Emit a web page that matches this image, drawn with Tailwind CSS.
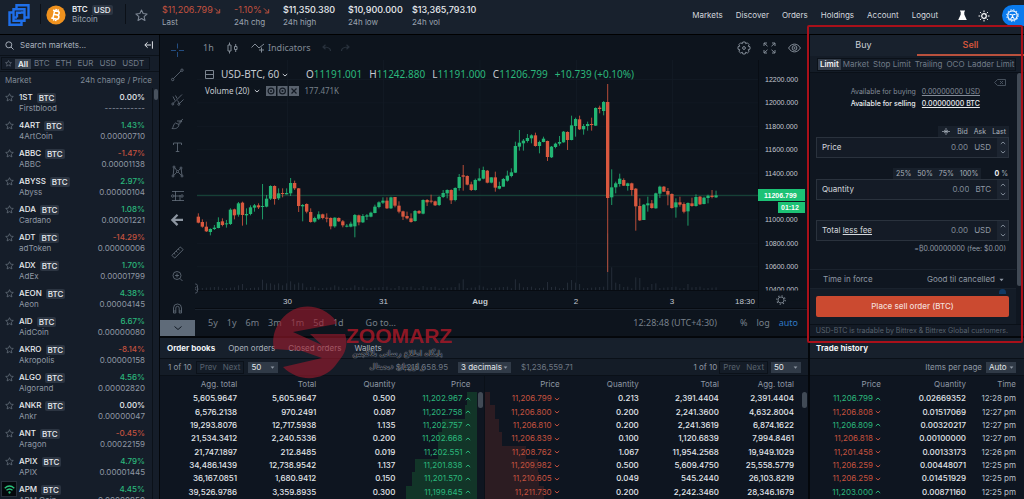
<!DOCTYPE html>
<html lang="en">
<head>
<meta charset="utf-8">
<meta name="viewport" content="width=device-width, initial-scale=1">
<title>USD-BTC – Bitcoin</title>
<script src="https://cdn.jsdelivr.net/npm/@tailwindcss/browser@4"></script>
</head>
<body class="h-screen overflow-hidden bg-[#04070b] font-['Inter','Liberation_Sans',sans-serif] text-[8px] leading-[11px] text-[#c9ced6]">

<svg class="hidden">
  <symbol id="star" viewBox="0 0 12 12"><path d="M6 .9l1.5 3.3 3.6.4-2.700 2.400.8 3.600L6 8.800l-3.200 1.800.8-3.600L.9 4.600l3.600-.4z" fill="none" stroke="currentColor" stroke-linejoin="round"/></symbol>
  <symbol id="caret" viewBox="0 0 6 4"><path d="M.5.5h5L3 3.500z" fill="currentColor"/></symbol>
  <symbol id="up" viewBox="0 0 6 4"><path d="M.8 3L3 1l2.200 2" fill="none" stroke="currentColor"/></symbol>
  <symbol id="down" viewBox="0 0 6 4"><path d="M.8 1L3 3l2.200-2" fill="none" stroke="currentColor"/></symbol>
  <symbol id="fall" viewBox="0 0 8 8"><path d="M1 1.500l5 5M6.500 2.500v4.300H2.200" fill="none" stroke="currentColor" stroke-width="1.100"/></symbol>
</svg>

<div class="relative flex h-full flex-col">

  <!-- Top bar -->
  <header class="flex h-[35px] shrink-0 items-start border-b border-black bg-[#18212d]">
    <a href="#" aria-label="Home" class="mt-[3px] ml-[7px] block">
      <svg class="h-6 w-6" viewBox="0 0 24 24" fill="none" stroke="#1f6fe8" stroke-width="2.400"><path d="M9.500 6V2.200h12v12.300h-4M14.500 17.500v4.300h-12V9.500h4"/><path d="M10 14.500H6.500V6.200h11v3.300M14 9.500h3.500v8.200h-11v-3.200" /><path d="M10 14.500V9.800h4"/></svg>
    </a>
    <div class="mt-1 ml-[9px] h-5 border-l border-[#0b1017]"></div>
    <svg class="mt-[5px] ml-[5px] h-5 w-5" viewBox="0 0 20 20"><circle cx="10" cy="10" r="9.600" fill="#f0921e"/><g transform="rotate(13 10 10)" fill="none" stroke="#fff" stroke-width="1.500"><path d="M6 6h4.800c2.500 0 2.500 3.700 0 3.700H7.700h3.500c2.800 0 2.800 4.200 0 4.200H6M7.700 6v7.900M8.900 4v2M11 4v2M8.900 14v2M11 14v2"/></g></svg>
    <div class="mt-1 ml-[6px] w-[53px]">
      <div class="flex items-center gap-1 font-semibold text-[#e8ebef]">BTC <span class="rounded-xs bg-[#2c3542] px-[2px] leading-[10px] font-medium">USD</span></div>
      <div class="leading-[9px] text-[#9aa3af]">Bitcoin</div>
    </div>
    <div class="mt-1 h-5 border-l border-[#0b1017]"></div>
    <button aria-label="Add to favourites" class="mt-[9px] ml-[9px] text-[#7c8693]"><svg class="h-[13px] w-[13px]"><use href="#star"/></svg></button>
    <dl class="mt-1 ml-[14px] flex leading-[12px] text-[#9aa3af]">
      <div class="flex w-[72px] flex-col-reverse"><dt>Last</dt><dd class="flex items-center gap-px text-[9px] text-[#c4523f]">$11,206.799<svg class="h-[7px] w-[7px]"><use href="#fall"/></svg></dd></div>
      <div class="flex w-[49px] flex-col-reverse"><dt>24h chg</dt><dd class="flex items-center gap-px text-[9px] text-[#c4523f]">-1.10%<svg class="h-[7px] w-[7px]"><use href="#fall"/></svg></dd></div>
      <div class="flex w-[65px] flex-col-reverse"><dt>24h high</dt><dd class="text-[9px] font-medium text-[#e8ebef]">$11,350.380</dd></div>
      <div class="flex w-[64px] flex-col-reverse"><dt>24h low</dt><dd class="text-[9px] font-medium text-[#e8ebef]">$10,900.000</dd></div>
      <div class="flex w-[72px] flex-col-reverse"><dt>24h vol</dt><dd class="text-[9px] font-medium text-[#e8ebef]">$13,365,793.10</dd></div>
    </dl>
    <nav class="mt-[10px] ml-auto flex gap-[13px] text-[#d4d8de]">
      <a href="#">Markets</a><a href="#">Discover</a><a href="#">Orders</a><a href="#">Holdings</a><a href="#">Account</a><a href="#">Logout</a>
    </nav>
    <button aria-label="Labs" class="mt-[10px] ml-[19px]"><svg class="h-[11px] w-[11px]" viewBox="0 0 11 11"><path d="M3 .5h5v1H7.300v3L9.800 10H1.200l2.500-5.500v-3H3z" fill="#fff"/></svg></button>
    <button aria-label="Theme" class="mt-[10px] ml-[10px]"><svg class="h-3 w-3" viewBox="0 0 12 12" fill="none" stroke="#fff"><circle cx="6" cy="6" r="2.300" stroke-width="1.200"/><path d="M6 .5v1.700M6 9.800v1.700M.5 6h1.700M9.800 6h1.700M2.100 2.100l1.200 1.200M8.700 8.700l1.200 1.200M9.900 2.100L8.700 3.300M3.300 8.700L2.100 9.900"/></svg></button>
    <button aria-label="Accessibility" class="mt-[5px] ml-3 flex h-[21px] w-[22px] items-center rounded-l-full bg-[#0a7bee] pl-1"><svg class="h-[13px] w-[13px]" viewBox="0 0 13 13" fill="none" stroke="#fff"><circle cx="6.500" cy="6.500" r="4.700" stroke-width="1.200"/><circle cx="6.500" cy="6.500" r="5.800" stroke-dasharray="1.300 1.740"/><path d="M3.500 5.300l3 .7 3-.7M6.500 6v1.800M4.600 10l1.900-2.500L8.400 10" stroke-width="1.100"/></svg></button>
  </header>

  <div class="flex min-h-0 flex-1">

    <!-- Market list -->
    <aside class="flex w-[159px] shrink-0 flex-col bg-[#151d29]">
      <div class="flex h-[21px] shrink-0 items-center border-b border-[#0b1119] px-[5px]">
        <svg class="h-[9px] w-[9px]" viewBox="0 0 9 9" fill="none" stroke="#a5adb8"><circle cx="3.800" cy="3.800" r="3"/><path d="M6 6l2.600 2.600"/></svg>
        <input type="search" aria-label="Search markets" placeholder="Search markets..." class="ml-[6px] min-w-0 flex-1 bg-transparent placeholder:text-[#aab2bd]">
        <button aria-label="Collapse"><svg class="mr-px h-2 w-[9px]" viewBox="0 0 9 8" fill="none" stroke="#e0e4e9"><path d="M8.400.3v7.400M7 4H1M3.600 1.300L.8 4l2.800 2.700"/></svg></button>
      </div>
      <div class="flex h-4 shrink-0 items-center border-b border-[#0b1119] px-[1px]">
        <div class="flex items-center border border-[#0b1119] pr-[2px] text-[#717b88]">
          <button aria-label="Favourites" class="px-[3px]"><svg class="h-[7px] w-[7px]"><use href="#star"/></svg></button>
          <button class="bg-[#3a4350] px-[3px] leading-[10px] font-semibold text-[#f0f2f5]">All</button><button class="px-[3px]">BTC</button><button class="px-[3px]">ETH</button><button class="px-[3px]">EUR</button><button class="px-[3px]">USD</button><button class="px-[3px]">USDT</button>
        </div>
      </div>
      <div class="flex h-[16px] shrink-0 items-center justify-between pr-[7px] pl-[5px] text-[#7f8995]"><span>Market</span><span>24h change / Price</span></div>
      <div class="flex min-h-0 flex-1">
        <ul id="markets" class="flex-1 overflow-hidden border-r border-[#0b1119] pt-1"></ul>
        <div class="w-[6px]"><div class="mt-[1px] ml-px h-[11px] w-1 rounded-full bg-[#48515d]"></div></div>
      </div>
    </aside>

    <!-- Chart and order books -->
    <main class="ml-px flex min-w-0 flex-1 flex-col">
      <section class="flex h-[301px] shrink-0 bg-[#0d141d]">
        <div class="flex w-[35px] shrink-0 flex-col justify-between text-[#66707c]">
          <svg class="h-[284px] w-[35px]" viewBox="0 0 35 284" fill="none" stroke="currentColor" stroke-width=".8">
            <path d="M17.500 8.500v5M17.500 17v5M11 15.500h5M19 15.500h5" stroke="#2a5c9a"/>
            <g><path d="M13.500 43.500l7.500-7.500"/><circle cx="12.700" cy="44.500" r="1.200"/><circle cx="22" cy="35.200" r="1.200"/></g>
            <g><path d="M13.500 68l8.500-8.500M19.500 68.500l4-4M15 65.500l-2-4M17 63.500l-1.500-3M17.500 65.500l2 3"/><circle cx="12.800" cy="69" r="1"/><circle cx="18.800" cy="69.300" r="1"/></g>
            <path d="M12 93.500c1.500-.5 1-4.500 3.500-5.500l3.500 1.500c-.5 4-4 4.500-7 4zM17 86l5 0-3 3.500M18.500 88l4.500-4"/>
            <path d="M13.500 110v-2h8v2M17.500 108v8.500M15.800 116.500h3.500"/>
            <g><circle cx="13" cy="141" r="1"/><circle cx="14" cy="132" r="1"/><circle cx="21" cy="133" r="1"/><circle cx="22" cy="141" r="1"/><circle cx="17.500" cy="136.500" r="1"/><path d="M13.200 140l.7-7M14.800 132.600l2 3M20.400 133.700l-2 2M21.200 134l.7 6M13.800 140.400l3-3.200M18.300 137.200l3 3.200"/></g>
            <g><path d="M12 156.500h12M14 161h6M12 165.500h12M15.500 156v10M20 160v6"/><circle cx="22" cy="161" r="1.200"/><circle cx="12.700" cy="161" r="1.200"/></g>
            <path d="M17.500 179.700l-5.200 5.200 5.200 5.200M13 184.900h10" stroke="#8d96a1" stroke-width="2.200"/>
            <g transform="translate(17.500 217.500) rotate(-45)"><rect x="-6" y="-2" width="12" height="4" rx=".5"/><path d="M-3-2v2M0-2v2M3-2v2"/></g>
            <g><circle cx="17" cy="240.500" r="4"/><path d="M20 243.500l2.500 2.500M15 240.500h4M17 238.500v4"/></g>
            <path d="M13.500 278v-5a4 4 0 018 0v5h-2.300v-5a1.700 1.700 0 00-3.400 0v5zM13.500 276h2.300M19.200 276h2.300"/>
          </svg>
          <button aria-label="Hide drawing tools" class="flex h-[16px] items-center justify-center bg-[#5f6b79]"><svg class="h-2 w-2" viewBox="0 0 8 8"><path d="M.5 2.500L4 5.500l3.500-3" fill="none" stroke="#101822"/></svg></button>
        </div>

        <div class="flex min-w-0 flex-1 flex-col font-['Noto_Sans','Open_Sans',sans-serif]">
          <div class="flex h-[25px] shrink-0 items-center text-[9px] text-[#828b96]">
            <button class="ml-2 w-[24px] text-left">1h</button>
            <button aria-label="Chart style" class="w-[24px]"><svg class="h-3 w-[11px]" viewBox="0 0 11 12" fill="none" stroke="currentColor"><path d="M1 3h3v6H1zM2.500.5V3M2.500 9v2.500M7.500 4.500h2.500v3H7.500zM8.700 2v2.500M8.700 7.500V10"/></svg></button>
            <button class="flex items-center gap-[3px]"><svg class="h-[11px] w-[14px]" viewBox="0 0 14 11" fill="none" stroke="currentColor"><path d="M.5 5.500L4 2l4 4 5-4M10.500 5.500v5M8 8h5"/></svg>Indicators</button>
            <button aria-label="Undo" class="ml-[11px] text-[#28313c]"><svg class="h-2 w-[9px]" viewBox="0 0 9 8" fill="none" stroke="currentColor" stroke-width="1.200"><path d="M8.500 7c0-3-2-4-7-4M3.500.8L1 3l2.500 2.300"/></svg></button>
            <button aria-label="Redo" class="ml-[10px] text-[#28313c]"><svg class="h-2 w-[9px]" viewBox="0 0 9 8" fill="none" stroke="currentColor" stroke-width="1.200"><path d="M.5 7c0-3 2-4 7-4M5.500.8L8 3 5.500 5.300"/></svg></button>
            <div class="mr-[7px] ml-auto flex items-center gap-3">
              <button aria-label="Settings"><svg class="h-[14px] w-[14px]" viewBox="0 0 14 14" fill="none" stroke="currentColor"><path d="M5.800 1h2.400l.5 1.700 1.600-.9 1.800 1.800-.9 1.600 1.800.5v2.500l-1.800.5.9 1.700-1.800 1.700-1.600-.9L8.200 13H5.800l-.5-1.800-1.600.9-1.800-1.700.9-1.700L1 8.200V5.700l1.800-.5-.9-1.600 1.800-1.800 1.600.9z"/><circle cx="7" cy="7" r="1.400"/></svg></button>
              <button aria-label="Full screen"><svg class="h-[12px] w-[13px]" viewBox="0 0 13 12" fill="none" stroke="currentColor"><path d="M1 4V1h3M1 1l3.500 3.200M9 1h3v3M12 1L8.500 4.200M1 8v3h3M1 11l3.500-3.200M9 11h3V8M12 11L8.500 7.800"/></svg></button>
              <button aria-label="Visibility"><svg class="h-[10px] w-[13px]" viewBox="0 0 13 10" fill="none" stroke="currentColor"><path d="M.6 5C3.500-.2 9.500-.2 12.400 5 9.500 10.200 3.500 10.200.6 5z"/><circle cx="6.500" cy="5" r="2.400"/><circle cx="6.500" cy="5" r=".6"/></svg></button>
            </div>
          </div>

          <div class="relative h-[249px] shrink-0">
            <svg id="chart" class="block h-full w-full" viewBox="195 60 613 249" preserveAspectRatio="xMinYMin meet"></svg>
            <div class="absolute top-2 left-[10px] flex items-center text-[10px] leading-[13px] whitespace-nowrap text-[#c5cad1]">
              <svg class="h-[9px] w-[9px] text-[#7b848f]" viewBox="0 0 9 9" fill="none" stroke="currentColor"><path d="M.5.500h8v8h-8zM.5 4.500h8"/></svg>
              <span class="ml-[7px] w-[61px]">USD-BTC, 60</span>
              <svg class="h-1 w-[6px]"><use href="#down"/></svg>
              <span class="ml-[18px] flex gap-[7px]"><span>O<span class="text-[#2bb77c]">11191.001</span></span><span>H<span class="text-[#2bb77c]">11242.880</span></span><span>L<span class="text-[#2bb77c]">11191.000</span></span><span>C<span class="text-[#2bb77c]">11206.799</span></span><span class="text-[#2bb77c]">+10.739 (+0.10%)</span></span>
            </div>
            <div class="absolute top-[25px] left-[10px] flex items-center text-[8px] leading-[12px] text-[#c5cad1]">
              <span>Volume (20)</span>
              <svg class="mr-[6px] ml-1 h-1 w-[6px]"><use href="#down"/></svg>
              <svg class="h-[10px] w-[33px]" viewBox="0 0 33 10"><path d="M0 0h10v10H0zM11.500 0h10v10h-10zM23 0h10v10H23z" fill="#59626e"/><g fill="none" stroke="#141b25" stroke-width="1.200"><circle cx="5" cy="5" r="2.900"/><circle cx="16.500" cy="5" r="2.900"/><path d="M25.500 2.500l5 5M30.500 2.500l-5 5"/></g><circle cx="5" cy="5" r="1" fill="#141b25"/><circle cx="16.500" cy="5" r="1" fill="#141b25"/></svg>
              <span class="ml-[6px] text-[#77808b]">177.471K</span>
            </div>
          </div>

          <div class="flex flex-1 items-center border-t border-[#1a222d] pb-[2px] text-[9px] text-[#77808b]">
            <div class="ml-[13px] flex gap-[9px]"><button>5y</button><button>1y</button><button>6m</button><button>3m</button><button>1m</button><button>5d</button><button>1d</button></div>
            <button class="ml-[22px]">Go to...</button>
            <div class="mr-[10px] ml-auto flex gap-[9px]"><button class="mr-[14px]">12:28:48 (UTC+4:30)</button><button>%</button><button>log</button><button class="text-[#2f79c4]">auto</button></div>
          </div>
        </div>
      </section>

      <section class="mt-[2px] flex min-h-0 flex-1 flex-col bg-[#0e1520]">
        <div class="flex h-[21px] shrink-0 items-center gap-[13px] border-b border-[#0a1018] bg-[#17202c] px-[7px] text-[#a9b1bb]">
          <button class="font-bold text-[#f0f2f5]">Order books</button><button>Open orders</button><button>Closed orders</button><button>Wallets</button>
        </div>
        <div class="flex h-[17px] shrink-0 items-center border-b border-[#0a1018] bg-[#141c27] text-[#8f98a4]">
          <div class="flex flex-1 items-center pl-2">
            <span>1 of 10</span>
            <span class="ml-[4px] flex border border-[#0b1119] text-[#59626e]"><button class="px-[3px]">Prev</button><button class="px-[3px]">Next</button></span>
            <label class="relative ml-[4px]"><select aria-label="Rows" class="block h-[11px] w-[30px] appearance-none bg-[#303a47] pl-[3px] text-[#e2e6eb]"><option>50</option></select><svg class="absolute top-1 right-[3px] h-[3px] w-[5px]"><use href="#caret"/></svg></label>
            <span class="mr-[10px] ml-auto text-[#6d7682]">$1,215,658.95</span>
          </div>
          <label class="relative"><select aria-label="Decimals" class="block h-[11px] w-[53px] appearance-none bg-[#303a47] pl-[3px] text-[#e2e6eb]"><option>3 decimals</option></select><svg class="absolute top-1 right-[3px] h-[3px] w-[5px]"><use href="#caret"/></svg></label>
          <div class="flex flex-1 items-center pr-[7px]">
            <span class="ml-[10px] text-[#6d7682]">$1,236,559.71</span>
            <span class="ml-auto">1 of 10</span>
            <span class="ml-[2px] flex border border-[#0b1119] text-[#59626e]"><button class="px-[3px]">Prev</button><button class="px-[3px]">Next</button></span>
            <label class="relative ml-[3px]"><select aria-label="Rows" class="block h-[11px] w-[30px] appearance-none bg-[#303a47] pl-[3px] text-[#e2e6eb]"><option>50</option></select><svg class="absolute top-1 right-[3px] h-[3px] w-[5px]"><use href="#caret"/></svg></label>
          </div>
        </div>
        <div class="flex min-h-0 flex-1">
          <div class="flex flex-1 border-r border-[#0a1018]">
            <table class="h-full flex-1 table-fixed text-right font-medium text-[#e2e6eb]">
              <thead class="h-4 text-[#8f98a4]"><tr><th class="w-1/4 pr-[2px] font-normal">Agg. total</th><th class="w-1/4 pr-[2px] font-normal">Total</th><th class="w-1/4 pr-[2px] font-normal">Quantity</th><th class="w-1/4 pr-[6px] font-normal">Price</th></tr></thead>
              <tbody id="bids"></tbody>
            </table>
            <div class="w-[7px]"><div class="mt-4 ml-px h-4 w-[5px] rounded-full bg-[#414a55]"></div></div>
          </div>
          <div class="flex flex-1">
            <table class="h-full flex-1 table-fixed text-right font-medium text-[#e2e6eb]">
              <thead class="h-4 text-[#8f98a4]"><tr><th class="w-1/4 pr-1 font-normal">Price</th><th class="w-1/4 pr-1 font-normal">Quantity</th><th class="w-1/4 pr-[3px] font-normal">Total</th><th class="w-1/4 pr-[7px] font-normal">Agg. total</th></tr></thead>
              <tbody id="asks"></tbody>
            </table>
            <div class="w-[7px]"><div class="mt-4 ml-px h-4 w-[5px] rounded-full bg-[#414a55]"></div></div>
          </div>
        </div>
      </section>
    </main>

    <!-- Order form and trade history -->
    <aside class="ml-[2px] flex w-[214px] shrink-0 flex-col">
      <section class="flex h-[301px] shrink-0 flex-col bg-[#0f1620]">
        <div class="flex h-[21px] shrink-0 bg-[#18212d] text-[9px] text-[#c9ced6]">
          <button class="flex-1 border-b-2 border-transparent">Buy</button><button class="flex-1 border-b-2 border-[#b9513d] font-semibold text-[#d0543b]">Sell</button>
        </div>
        <div class="flex h-[17px] shrink-0 items-center border-b border-[#0a1018] bg-[#141c27] pl-[7px] whitespace-nowrap text-[#717b88]">
          <div class="flex border border-[#0b1119]"><button class="bg-[#343d4a] px-[2px] leading-[10px] font-semibold text-[#f0f2f5]">Limit</button><button class="px-[2px]">Market</button><button class="px-[2px]">Stop Limit</button><button class="px-[2px]">Trailing</button><button class="px-[2px]">OCO</button><button class="px-[1px]">Ladder Limit</button></div>
        </div>
        <div class="flex h-[251px] shrink-0">
          <form class="flex min-w-0 flex-1 flex-col pl-[6px]">
            <div class="flex flex-1 flex-col pr-[7px]">
              <button type="button" aria-label="Clear" class="mt-[6px] mr-[3px] self-end"><svg class="h-[7px] w-3" viewBox="0 0 12 7" fill="none" stroke="#4d5763" stroke-width=".9"><path d="M3.500.5h8v6h-8L.6 3.500zM6 2l3 3M9 2L6 5"/></svg></button>
              <dl class="mr-[29px] grid grid-cols-[auto_auto] justify-end gap-x-[6px] text-[7px] leading-[12px] text-[#838c98]">
                <dt>Available for buying</dt><dd class="underline">0.00000000 USD</dd>
                <dt class="font-medium text-[#e8ebef]">Available for selling</dt><dd class="font-medium text-[#e8ebef] underline">0.00000000 BTC</dd>
              </dl>
              <div class="mt-4 flex self-end text-[7px] text-[#a9b1bb]"><button type="button" aria-label="Midpoint" class="bg-[#18202b] px-[4px]"><svg class="h-[7px] w-2" viewBox="0 0 8 7" stroke="currentColor"><path d="M0 3.500h8M4 0v7M2 2l2 1.500L6 2M2 5l2-1.500L6 5" fill="none" stroke-width=".7"/></svg></button><button type="button" class="bg-[#18202b] px-[3px]">Bid</button><button type="button" class="bg-[#18202b] px-[3px]">Ask</button><button type="button" class="bg-[#18202b] px-[3px]">Last</button></div>
              <div class="flex h-[21px] items-center border border-[#2a323d] bg-[#141b26] pl-[5px]"><label for="price" class="text-[#d4d8de]">Price</label><input id="price" placeholder="0.00" class="min-w-0 flex-1 bg-transparent text-right placeholder:text-[#7f8995]"><span class="mx-[6px] text-[#8f98a4]">USD</span><span class="flex h-full w-[11px] flex-col items-center justify-around bg-[#1c2430] text-[#7f8995]"><button type="button" aria-label="Increase price"><svg class="block h-1 w-[6px]"><use href="#up"/></svg></button><button type="button" aria-label="Decrease price"><svg class="block h-1 w-[6px]"><use href="#down"/></svg></button></span></div>
              <div class="mt-[10px] flex items-center justify-end text-[7px] text-[#a9b1bb]"><span class="flex bg-[#18202b]"><button type="button" class="px-[3px]">25%</button><button type="button" class="px-[3px]">50%</button><button type="button" class="px-[3px]">75%</button><button type="button" class="px-[3px]">100%</button></span><span class="mr-px ml-[13px]"><b class="text-[#f0f2f5]">0</b> %</span></div>
              <div class="flex h-[21px] items-center border border-[#2a323d] bg-[#141b26] pl-[5px]"><label for="qty" class="text-[#d4d8de]">Quantity</label><input id="qty" placeholder="0.00" class="min-w-0 flex-1 bg-transparent text-right placeholder:text-[#7f8995]"><span class="mx-[6px] text-[#8f98a4]">BTC</span><span class="flex h-full w-[11px] flex-col items-center justify-around bg-[#1c2430] text-[#7f8995]"><button type="button" aria-label="Increase quantity"><svg class="block h-1 w-[6px]"><use href="#up"/></svg></button><button type="button" aria-label="Decrease quantity"><svg class="block h-1 w-[6px]"><use href="#down"/></svg></button></span></div>
              <div class="mt-5 flex h-[21px] items-center border border-[#2a323d] bg-[#141b26] pl-[5px]"><label for="total" class="text-[#d4d8de]">Total <span class="underline">less fee</span></label><input id="total" placeholder="0.00" class="min-w-0 flex-1 bg-transparent text-right placeholder:text-[#7f8995]"><span class="mx-[6px] text-[#8f98a4]">USD</span><span class="flex h-full w-[11px] flex-col items-center justify-around bg-[#1c2430] text-[#7f8995]"><button type="button" aria-label="Increase total"><svg class="block h-1 w-[6px]"><use href="#up"/></svg></button><button type="button" aria-label="Decrease total"><svg class="block h-1 w-[6px]"><use href="#down"/></svg></button></span></div>
              <p class="mt-[2px] mr-[3px] text-right text-[7px] text-[#8f98a4]">=₿0.00000000 (fee: $0.00)</p>
            </div>
            <div class="-ml-[6px] flex h-5 items-center justify-between border-y border-[#1a222d] pr-3 pl-[13px] text-[#8f98a4]"><label for="tif">Time in force</label><span class="relative"><select id="tif" class="appearance-none bg-transparent pr-[9px] text-right"><option>Good til cancelled</option></select><svg class="absolute top-1 right-0 h-1 w-[5px]"><use href="#caret"/></svg></span></div>
            <div class="relative -ml-[6px] flex h-[35px] items-center bg-[#141c27] pr-[7px] pl-[6px]">
              <div class="absolute top-0 right-[10px] h-[5px] w-[7px] rounded-t-full bg-[#123a63]"></div>
              <button type="submit" class="h-[21px] flex-1 rounded-xs bg-[#cb4a30] font-medium text-[#f3dcd6]">Place sell order (BTC)</button>
            </div>
          </form>
          <div class="w-[8px]"><div class="ml-px h-[213px] w-[5px] rounded-full bg-[#414a55]"></div></div>
        </div>
        <p class="flex-1 border-t border-[#0a1018] bg-[#131a25] pr-4 text-right text-[7px] leading-[11px] text-[#59626e]">USD-BTC is tradable by Bittrex &amp; Bittrex Global customers.</p>
      </section>

      <section class="mt-[2px] flex min-h-0 flex-1 flex-col bg-[#0e1520]">
        <h2 class="h-[21px] shrink-0 border-b border-[#0a1018] bg-[#17202c] pl-[6px] leading-[21px] font-bold text-[#f0f2f5]">Trade history</h2>
        <div class="flex h-[17px] shrink-0 items-center justify-end gap-1 border-b border-[#0a1018] bg-[#141c27] pr-[8px] text-[#8f98a4]"><label for="per">Items per page</label><span class="relative"><select id="per" class="block h-[11px] w-[30px] appearance-none bg-[#303a47] pl-[3px] text-[#e2e6eb]"><option>Auto</option></select><svg class="absolute top-1 right-[2px] h-[3px] w-[5px]"><use href="#caret"/></svg></span></div>
        <table class="mr-2 min-h-0 flex-1 table-fixed text-right font-medium text-[#e2e6eb]">
          <thead class="h-4 text-[#8f98a4]"><tr><th class="w-[71px] font-normal">Price</th><th class="w-[85px] font-normal">Quantity</th><th class="w-[50px] font-normal">Time</th></tr></thead>
          <tbody id="trades"></tbody>
        </table>
      </section>
    </aside>
  </div>

  <!-- Highlight around the order form -->
  <div class="pointer-events-none absolute top-[25px] right-px h-[318px] w-[216px] rounded-xs border-2 border-[#a9101a]"></div>

  <!-- Watermark -->
  <div class="pointer-events-none absolute top-[306px] left-[273px] h-[74px] w-[180px]">
    <svg class="absolute inset-0 h-[74px] w-[74px] opacity-60" viewBox="0 0 74 74" fill="#a01a2c"><path d="M63 15C49-3 23-5 8 14 0 24-1 36 1 43l28 2 20 7L10 61C26 77 50 75 62 60L68 52C76 42 73 30 72 28H37l12 11-29-13 43-8z"/></svg>
    <div class="absolute top-[16px] left-[73px] font-['Liberation_Sans',sans-serif] text-[21px] leading-[28px] font-bold text-[#a51827]/85">ZOOMARZ</div>
    <div dir="rtl" lang="fa" class="absolute top-[41px] left-[78px] w-[93px] text-center font-['DejaVu_Sans',sans-serif] text-[8px] leading-[13px] whitespace-nowrap text-[#0a0f16] [text-shadow:0_0_1px_#8d949e,0_0_1px_#8d949e,0_0_1px_#8d949e]">پایگاه اطلاع رسانی بلاکچین<br>و ارزهای دیجیتال</div>
  </div>

  <!-- Connection status -->
  <div class="absolute bottom-[2px] left-px flex h-4 w-4 items-center justify-center border border-[#27303c] bg-[#05080c]"><svg class="h-[9px] w-[11px]" viewBox="0 0 11 9" fill="none" stroke="#2bc27c" stroke-width="1.300"><path d="M.7 3.200c3-2.800 6.600-2.800 9.600 0M2.500 5.300c2-1.800 4-1.800 6 0"/><circle cx="5.500" cy="7.500" r=".5"/></svg></div>
</div>

<script>
const GREEN = 'text-[#2bb77c]', RED = 'text-[#c4523f]', WHITE = 'text-[#e8ebef]';
const tone = v => v[0] === '-' ? RED : v === '0.00%' ? WHITE : GREEN;
const markets = [['1ST','Firstblood','0.00%','-----------'],['4ART','4ArtCoin','1.43%','0.00000710'],['ABBC','ABBC','-1.47%','0.00001138'],['ABYSS','Abyss','2.97%','0.00000104'],['ADA','Cardano','1.08%','0.00001221'],['ADT','adToken','-14.29%','0.00000006'],['ADX','AdEx','1.70%','0.00001799'],['AEON','Aeon','4.38%','0.00004145'],['AID','AidCoin','6.67%','0.00000080'],['AKRO','Akropolis','-8.14%','0.00000158'],['ALGO','Algorand','4.56%','0.00002820'],['ANKR','Ankr','0.00%','0.00000047'],['ANT','Aragon','-0.45%','0.00022159'],['APIX','APIX','4.79%','0.00001445'],['APM','APM Coin','4.45%','0.00000950']];
document.getElementById('markets').innerHTML = markets.map(([s, n, c, p]) => `<li class="flex h-7 pr-[7px] pl-[5px]">
<button aria-label="Favourite ${s}" class="mt-px h-[9px] w-[14px] text-[#66707c]"><svg class="h-[9px] w-[9px]"><use href="#star"/></svg></button>
<div class="flex-1"><div class="flex items-center gap-1 font-medium text-[#e8ebef]">${s}<span class="rounded-xs bg-[#2c3542] px-[2px] leading-[10px]">BTC</span></div><div class="text-[#8f98a4]">${n}</div></div>
<div class="text-right"><div class="font-medium ${tone(c)}">${c}</div><div class="text-[#8f98a4]">${p}</div></div></li>`).join('');

const price = (p, dir) => `<span class="inline-flex items-center gap-[2px] font-normal ${dir === 'up' ? GREEN : RED}">${p}<svg class="h-1 w-[6px]"><use href="#${dir}"/></svg></span>`;
const SCALE = 0.0018;
const num = s => parseFloat(s.replace(',', ''));
const bids = [['5,605.9647','5,605.9647','0.500','11,202.967'],['6,576.2138','970.2491','0.087','11,202.758'],['19,293.8076','12,717.5938','1.135','11,202.757'],['21,534.3412','2,240.5336','0.200','11,202.668'],['21,747.1897','212.8485','0.019','11,202.551'],['34,486.1439','12,738.9542','1.137','11,201.838'],['36,167.0851','1,680.9412','0.150','11,201.570'],['39,526.9786','3,359.8935','0.300','11,199.645']];
document.getElementById('bids').innerHTML = bids.map(r => `<tr><td class="pr-[2px]">${r[0]}</td><td class="pr-[2px]">${r[1]}</td><td class="pr-[2px]">${r[2]}</td><td class="relative pr-[6px]"><div class="absolute inset-y-0 right-0 bg-[#123528]" style="width:${Math.round(num(r[0]) * SCALE)}px"></div><span class="relative">${price(r[3], 'up')}</span></td></tr>`).join('');
const asks = [['11,206.799','0.213','2,391.4404','2,391.4404'],['11,206.800','0.200','2,241.3600','4,632.8004'],['11,206.810','0.200','2,241.3619','6,874.1622'],['11,206.839','0.100','1,120.6839','7,994.8461'],['11,208.762','1.067','11,954.2568','19,949.1029'],['11,209.982','0.500','5,609.4750','25,558.5779'],['11,210.605','0.049','545.2440','26,103.8219'],['11,211.730','0.200','2,242.3460','28,346.1679']];
document.getElementById('asks').innerHTML = asks.map(r => `<tr><td class="relative pr-1"><div class="absolute inset-y-0 left-0 bg-[#2c1c22]" style="width:${Math.round(num(r[3]) * SCALE * 1.15)}px"></div><span class="relative">${price(r[0], 'down')}</span></td><td class="pr-1">${r[1]}</td><td class="pr-[3px]">${r[2]}</td><td class="pr-[7px]">${r[3]}</td></tr>`).join('');
const trades = [['11,206.799','up','0.02669352','12:28 pm'],['11,206.808','down','0.01517069','12:27 pm'],['11,206.809','up','0.00320217','12:27 pm'],['11,206.818','down','0.00100000','12:27 pm'],['11,201.458','down','0.00133173','12:26 pm'],['11,206.259','down','0.00448071','12:25 pm'],['11,206.259','down','0.01451929','12:25 pm'],['11,203.000','up','0.00871160','12:25 pm']];
document.getElementById('trades').innerHTML = trades.map(r => `<tr><td>${price(r[0], r[1])}</td><td>${r[2]}</td><td class="font-normal text-[#b9c0c9]">${r[3]}</td></tr>`).join('');

// Hourly candles: direction, body top, body bottom, wick top, wick bottom, in thirds of a chart unit.
const first = 'r470 488 460 490,r486 500 478 503,r500 514 485 516,g507 516 505 526,g503 507 495 510,g486 504 472 505,r484 495 475 499,g490 492 480 503,g449 492 445 495,r448 466 446 478,g430 464 426 470,r428 465 425 497,g462 466 445 494,g442 462 436 466,g436 443 432 455,r436 442 430 447,g438 441 372 478,g416 440 405 442,g378 416 376 420,r378 417 376 434,g400 415 385 420,r399 402 385 412,g399 403 385 403,g369 400 354 408,r369 385 362 390,r385 438 384 456,g435 439 432 484,r432 455 430 460,r456 486 445 488,g474 485 470 488,g463 476 454 480,r463 474 461 478,r473 476 460 487,r474 499 472 508,g473 499 472 503,r474 484 472 486,r484 496 480 502,g497 500 492 502,g491 500 485 502,g465 499 462 532,r466 487 464 496,g468 487 462 489,g466 470 462 480,g458 470 455 472,g440 459 434 460,g427 441 424 445,g422 428 412 432,r422 445 412 447,g412 445 410 447,r411 437 411 442,r437 455 424 460,r454 470 452 480,r468 475 455 478,r475 486 460 488,g453 483 450 485,r453 460 450 462,g420 461 418 463,r420 427 417 438,r422 425 404 430,r424 436 422 438,g411 435 408 438,g399 411 390 414,g390 400 388 415,r390 421 388 432,g384 420 382 424,g351 384 342 392,r346 350 315 392,r348 374 346 376,r373 390 365 393,g360 390 356 392,g355 362 325 364,g330 356 320 358';
const second = 'r302 338 300 340,g322 338 322 340,r322 353 305 365,g348 356 335 358,g327 350 324 350,g317 332 302 335,g307 318 295 322,g228 308 215 309,g218 230 180 242,g212 220 207 242,g204 213 192 218,g196 205 193 220,r196 228 188 230,g216 228 212 250,g206 216 200 217,r213 261 212 273,g230 262 228 264,g221 231 218 235,g216 221 198 227,g185 217 183 218,r186 210 184 240,g166 210 137 211,g147 168 143 200,r148 178 137 180,g168 178 162 194,g162 168 155 182,r162 165 143 182,g114 167 112 168,r113 117 107 130,g96 123 93 136,r96 384 42 606,g352 382 298 405,g340 352 335 370,g326 342 311 350,r330 347 325 348,g340 348 338 362,r340 360 338 377,r356 409 354 482,r408 451 385 453,g404 450 402 450,g400 406 380 425,r400 414 390 416,g370 415 368 416,g350 371 347 384,r350 365 348 366,r363 374 354 406,r372 414 370 416,g397 412 385 443,r397 404 380 410,r402 425 397 430,g399 424 397 467,r400 408 383 410,g381 408 373 410,r380 403 378 405,g383 402 380 403,g377 384 374 400,r377 381 360 385,g376 382 362 384';
const parse = (s, off) => s.split(',').map(c => [c[0], ...c.slice(1).split(' ').map(v => +v + off)]);
const candles = parse(first, 180).concat(parse(second, 210));
const peaks = {10:14,11:18,16:31,17:20,18:20,19:16,20:20,21:14,22:20,23:26,24:17,25:22,26:20,34:14,39:14,50:12,56:12,65:20,66:32,70:14,79:32,80:20,87:24,92:22,93:30,94:22,95:18,102:170,103:68,104:22,105:18,109:38,110:36,113:18,114:20,122:18};
let g = '<path d="M197 290.500H758M195 308.500H808" stroke="#070b11"/><path d="M758.500 60V309" stroke="#080d14"/>';
for (let k = 0; k < 9; k++) g += `<path d="M197 ${79.5 + k * 23.4}H758" stroke="#131b25" stroke-width=".8"/>`;
for (const x of [287.5, 383.5, 480, 576.5, 672.5]) g += `<path d="M${x} 60V290" stroke="#131b25" stroke-width=".8"/>`;
g += '<path d="M197 195.300H758" stroke="#1d5a46" stroke-width=".8"/><g transform="scale(.333333)">';
candles.forEach(([d, t, b, wt, wb], i) => {
  const x = 595 + i * 12.04, c = d === 'g' ? '#22b573' : '#d9583f', v = peaks[i] || 5 + (i * 7) % 6;
  g += `<path d="M${x} 870v${-v}" stroke="#2a333e" stroke-width="2.500"/><path d="M${x} ${wt}V${wb}" stroke="${c}" stroke-width="2.500"/><path d="M${x - 5} ${t}h10V${Math.max(b, t + 3)}h-10z" fill="${c}"/>`;
});
g += '</g><g font-family="Liberation Sans, sans-serif" font-size="7" fill="#c3c9d1">';
for (let k = 0; k < 9; k++) if (k !== 5) g += `<text x="765" y="${82 + k * 23.4}">${12200 - k * 200}.000</text>`;
g += '<text x="765" y="292">10400.000</text><path d="M759 290.500h49v10h-49z" fill="#0d141d"/>';
g += '<g font-size="8" text-anchor="middle"><text x="287.500" y="303.500">30</text><text x="383.500" y="303.500">31</text><text x="480" y="303.500" font-weight="bold">Aug</text><text x="576" y="303.500">2</text><text x="672" y="303.500">3</text><text x="745" y="303.500">18:30</text></g></g>';
g += '<path d="M758 189h47v12h-47zM778 202h27v11h-27z" fill="#1cc275"/><g font-family="Liberation Sans, sans-serif" font-size="7" font-weight="bold" fill="#fff"><text x="764" y="197.500">11206.799</text><text x="781" y="210">01:12</text></g>';
g += '<g fill="none" stroke="#7b848f" stroke-width=".9"><circle cx="781" cy="300" r="3"/><circle cx="781" cy="300" r="4.200" stroke-width="1.200" stroke-dasharray="1.300 2"/></g>';
g += '<path d="M192 284h3.500q2 0 2 2v5q0 2-2 2H192zM196.500 286.500l-1.500 2 1.500 2" fill="none" stroke="#59626e" stroke-width=".8"/>';
document.getElementById('chart').innerHTML = g;
</script>
</body>
</html>
